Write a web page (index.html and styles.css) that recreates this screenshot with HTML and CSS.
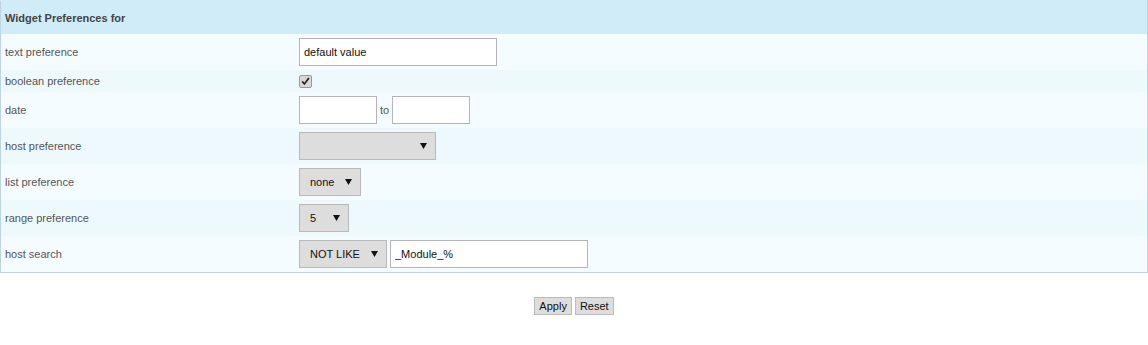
FILE: index.html
```html
<!DOCTYPE html>
<html>
<head>
<meta charset="utf-8">
<link rel="stylesheet" href="styles.css">
</head>
<body>
<table class="prefs">
  <tr class="head"><th colspan="2">Widget Preferences for</th></tr>
  <tr class="odd">
    <td class="label">text preference</td>
    <td class="field"><input class="text wide" type="text" value="default value"></td>
  </tr>
  <tr class="even">
    <td class="label">boolean preference</td>
    <td class="field"><input class="check" type="checkbox" checked></td>
  </tr>
  <tr class="odd">
    <td class="label">date</td>
    <td class="field"><div class="inline"><input class="text date" type="text"><span class="to">to</span><input class="text date" type="text"></div></td>
  </tr>
  <tr class="even">
    <td class="label">host preference</td>
    <td class="field"><select class="sel host"><option></option></select></td>
  </tr>
  <tr class="odd">
    <td class="label">list preference</td>
    <td class="field"><select class="sel list"><option>none</option></select></td>
  </tr>
  <tr class="even">
    <td class="label">range preference</td>
    <td class="field"><select class="sel range"><option>5</option></select></td>
  </tr>
  <tr class="odd">
    <td class="label">host search</td>
    <td class="field"><div class="inline"><select class="sel op"><option>NOT LIKE</option></select><input class="text wide" type="text" value="_Module_%"></div></td>
  </tr>
</table>
<div class="actions">
  <button class="btn" type="button">Apply</button>
  <button class="btn" type="button">Reset</button>
</div>
</body>
</html>
```

FILE: styles.css
```css
html, body {
  margin: 0;
  padding: 0;
  background: #ffffff;
  font-family: "Liberation Sans", Arial, sans-serif;
  font-size: 11px;
}

.prefs {
  width: 1148px;
  border-collapse: collapse;
  border: 1px solid #bed3e3;
  border-top-color: #d0ecf8;
}

.head th {
  height: 33px;
  padding: 0 4px;
  text-align: left;
  background: #d0ecf8;
  color: #444444;
  font-weight: bold;
  font-size: 11px;
  vertical-align: middle;
}

.odd td { background: #f5fcff; }
.even td { background: #eef9fe; }

.prefs td {
  padding: 4px;
  vertical-align: middle;
}

.label {
  width: 286px;
  color: #555555;
}

.inline {
  display: flex;
  align-items: center;
  gap: 3px;
}

.to { color: #555555; }

.text {
  box-sizing: border-box;
  height: 28px;
  margin: 0;
  padding: 0 4px;
  border: 1px solid #b5b5b5;
  background: #ffffff;
  color: #111111;
  font-family: "Liberation Sans", Arial, sans-serif;
  font-size: 11px;
  outline: none;
  display: block;
}

.wide { width: 198px; }
.date { width: 78px; }

.check {
  appearance: none;
  -webkit-appearance: none;
  display: block;
  box-sizing: border-box;
  width: 13px;
  height: 13px;
  margin: 1px 0 0 0;
  border: 1px solid #999999;
  border-radius: 2px;
  background: #d8d8d8;
  position: relative;
}

.check::after {
  content: "";
  position: absolute;
  left: 1px;
  top: 1px;
  width: 9px;
  height: 9px;
  background: url("data:image/svg+xml,%3Csvg xmlns='http://www.w3.org/2000/svg' viewBox='0 0 9 9'%3E%3Cpath d='M0.6 5 L3.4 8.2 L8.6 1.4 L7.2 0.6 L3.3 5.8 L1.9 3.7 Z' fill='%23222'/%3E%3C/svg%3E") no-repeat center / 9px 9px;
}

.sel {
  appearance: none;
  -webkit-appearance: none;
  box-sizing: border-box;
  height: 28px;
  margin: 0;
  padding: 0 20px 0 10px;
  border: 1px solid #b9b9b9;
  border-radius: 0;
  background: #dddddd url("data:image/svg+xml,%3Csvg xmlns='http://www.w3.org/2000/svg' viewBox='0 0 7 6'%3E%3Cpath d='M0 0 H7 L3.5 6 Z' fill='%23111'/%3E%3C/svg%3E") no-repeat right 8px center / 7px 6px;
  color: #111111;
  font-family: "Liberation Sans", Arial, sans-serif;
  font-size: 11px;
  display: block;
  outline: none;
}

.host { width: 137px; }
.list { width: 62px; }
.range { width: 50px; }
.op { width: 88px; }

.actions {
  display: flex;
  justify-content: center;
  gap: 3px;
  padding-top: 24px;
}

.btn {
  box-sizing: border-box;
  height: 18px;
  margin: 0;
  padding: 0 4px;
  border: 1px solid #bbbbbb;
  background: #dddddd;
  color: #111111;
  font-family: "Liberation Sans", Arial, sans-serif;
  font-size: 11px;
}
```
